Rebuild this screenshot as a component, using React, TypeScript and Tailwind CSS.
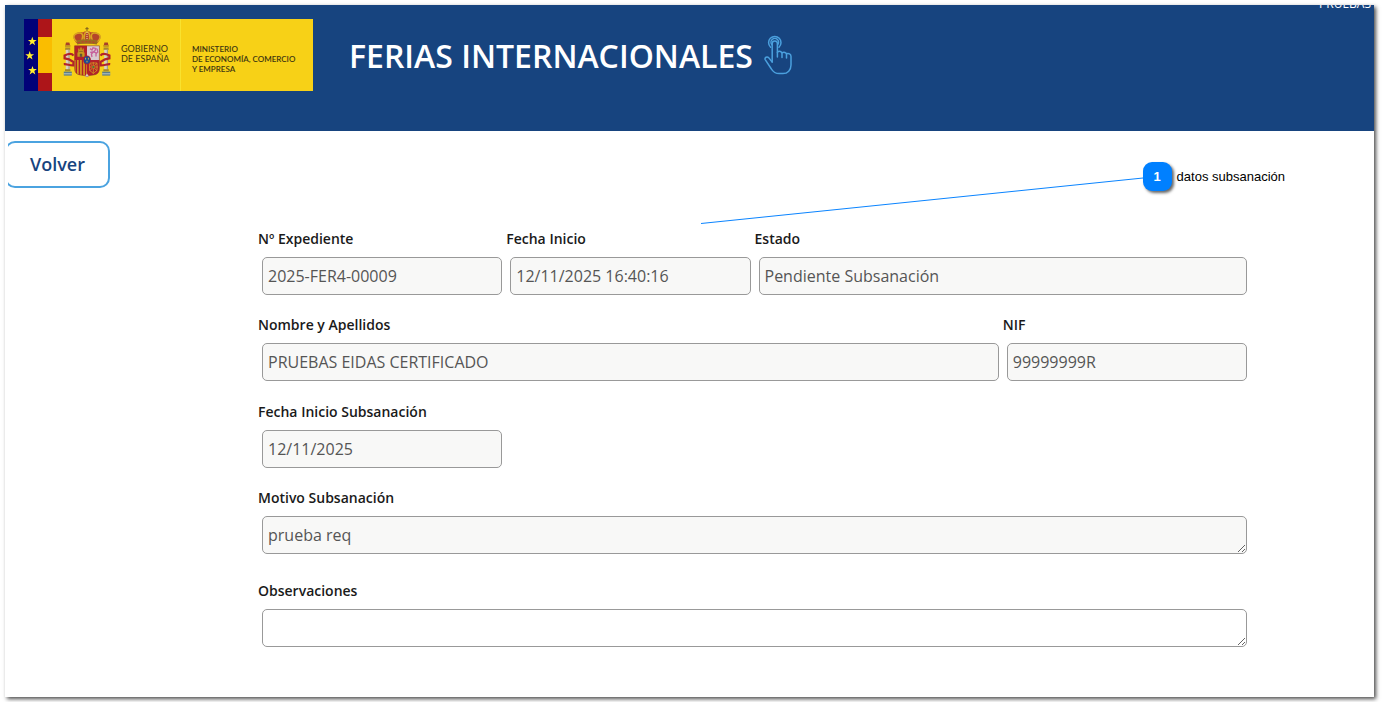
import React from "react";

function Star({ x, y }: { x: number; y: number }) {
  return (
    <path
      transform={`translate(${x} ${y})`}
      d="M0-4.6 1.1-1.4H4.4L1.8.6 2.8 3.9 0 1.9-2.8 3.9-1.8.6-4.4-1.4H-1.1Z"
      fill="#ffee2e"
    />
  );
}

function FlagStripe() {
  return (
    <svg width="28" height="72" viewBox="0 0 28 72" aria-hidden="true">
      <rect width="14" height="72" fill="#010178" />
      <rect x="14" width="14" height="72" fill="#ad1519" />
      <rect x="14" y="18" width="14" height="36" fill="#fabd00" />
      <Star x={8.3} y={22.4} />
      <Star x={5.7} y={36.6} />
      <Star x={8.5} y={51.5} />
    </svg>
  );
}

function Pillar() {
  return (
    <g>
      <path d="M2.2 2.4 3-1H6.4L7.2 2.4Z" fill="#a8402a" />
      <path d="M2 1.5H7.4V3.6H2Z" fill="#c79a22" />
      <rect x="2.2" y="4" width="5" height="2.4" fill="#a98a2b" />
      <rect x="2.8" y="6.2" width="3.8" height="20" fill="#d9d3c2" />
      <rect x="5.4" y="6.2" width="1.2" height="20" fill="#a39d8e" />
      <rect x="2" y="25.6" width="5.4" height="2" fill="#a98a2b" />
      <rect x="0.8" y="28" width="8" height="4" fill="#5c7d88" />
      <path d="M.8 30.2H8.8" stroke="#d3dad2" strokeWidth=".8" />
    </g>
  );
}

function CoatOfArms() {
  return (
    <svg width="48" height="52" viewBox="0 0 48 52" aria-hidden="true">
      {/* crown */}
      <path d="M24 0V4.4M22.4 1.6H25.6" stroke="#8a6a1c" strokeWidth="1.1" />
      <path
        d="M14 16.6C10.4 12.6 9.4 9.4 12 7.2 14.6 5 18 5.4 20 5.4 21.4 3.8 26.6 3.8 28 5.4 30 5.4 33.4 5 36 7.2 38.6 9.4 37.6 12.6 34 16.6Z"
        fill="#b5452a"
      />
      <path
        d="M14 15C10.4 12 9.8 9 12.4 7.2 16 5 19 6 19.6 8 20 10 19 12 18.6 14M34 15C37.6 12 38.2 9 35.6 7.2 32 5 29 6 28.4 8 28 10 29 12 29.4 14M21.6 14C20.4 10 21.6 5 24 4.6 26.4 5 27.6 10 26.4 14"
        fill="none"
        stroke="#d9a520"
        strokeWidth="1.5"
      />
      <path d="M24 5V14" stroke="#f1dfa5" strokeWidth="1" strokeDasharray="1 1" />
      <path d="M13.4 13.6Q24 11 34.6 13.6L33.8 17.6Q24 15.6 14.2 17.6Z" fill="#9a6e22" />
      <path d="M15 15.6Q24 13.8 33 15.6" fill="none" stroke="#c43a30" strokeWidth="1.2" strokeDasharray="2 1.6" />

      {/* pillars with their ribbons */}
      <g transform="translate(0 16.6)">
        <Pillar />
      </g>
      <g transform="translate(38.4 16.6)">
        <Pillar />
      </g>
      <path
        d="M10.5 28.6C8.6 25.8 5 26.8 1.6 28.4V31.4L6 32.4 10.4 35V38.4C6.6 38.6 4 36.8.8 37.2"
        fill="none"
        stroke="#b3232a"
        strokeWidth="2.2"
      />
      <path
        d="M37.5 28.6C39.4 25.8 43 26.8 46.4 28.4V31.4L42 32.4 37.6 35V38.4C41.4 38.6 44 36.8 47.2 37.2"
        fill="none"
        stroke="#b3232a"
        strokeWidth="2.2"
      />

      {/* shield */}
      <clipPath id="shield">
        <path d="M11.6 18.8H36.4V41.4Q36.4 47.6 30.2 48 26 48.2 24 49.8 22 48.2 17.8 48 11.6 47.6 11.6 41.4Z" />
      </clipPath>
      <g clipPath="url(#shield)">
        <rect x="11" y="18" width="13" height="15" fill="#b3202a" />
        <rect x="24" y="18" width="13" height="15" fill="#d9cbd0" />
        <rect x="11" y="33" width="13" height="17" fill="#d6a51c" />
        <rect x="24" y="33" width="13" height="17" fill="#b3202a" />
        <path
          d="M14.4 29.8V25.4H15.2V21.6H16.4V22.8H17.2V20.6H18.8V22.8H19.6V21.6H20.8V25.4H21.6V29.8Z"
          fill="#c79a1e"
        />
        <path d="M17.2 29.8V27H18.8V29.8M16.2 24.4H19.8" fill="#4b4a52" stroke="#6a4b20" strokeWidth=".6" />
        <path
          d="M27 21.6 29 23 30 20.8 32.8 21.4 32 23.6 30.6 24.8 33 26V29.6M30.6 24.8 28.4 27 29 30M27.2 25.4 30 25M33.2 26.4 34.8 25 34 21.6"
          fill="none"
          stroke="#c65f9a"
          strokeWidth="1.3"
        />
        <path d="M13.3 33V50M16.4 33V50M19.5 33V50M22.6 33V50" stroke="#b3202a" strokeWidth="1.5" />
        <path
          d="M26.6 36H34V43.4L30.3 46.4 26.6 43.4ZM26.6 36 34 44M34 36 26.6 44M30.3 35V47M26 40H35"
          fill="none"
          stroke="#cf8c24"
          strokeWidth=".9"
        />
        <circle cx="30.3" cy="40" r="1" fill="#3c7c3c" />
      </g>
      <path
        d="M11.6 18.8H36.4V41.4Q36.4 47.6 30.2 48 26 48.2 24 49.8 22 48.2 17.8 48 11.6 47.6 11.6 41.4Z"
        fill="none"
        stroke="#8d3c25"
        strokeWidth=".6"
      />
      <path d="M22 49.6 24 46.4 26 49.6Z" fill="#d5cfc0" />
      <ellipse cx="24" cy="33" rx="3.9" ry="4.5" fill="#b3202a" />
      <ellipse cx="24" cy="33" rx="3.2" ry="3.8" fill="#1b4c96" />
      <path d="M22.6 30.8V32.6M25.4 30.8V32.6M24 33.8V35.4" stroke="#d3b33d" strokeWidth="1" />
    </svg>
  );
}

function TapIcon() {
  return (
    <svg
      width="28"
      height="40"
      viewBox="0 0 28 40"
      fill="none"
      stroke="#4ba0de"
      strokeWidth="1.5"
      strokeLinecap="round"
      strokeLinejoin="round"
      aria-hidden="true"
    >
      <path d="M6.6 12.2A6.2 6.2 0 1 1 15 12.2" />
      <path d="M8 9.8A3.8 3.8 0 1 1 13.6 9.8" />
      <path d="M8.2 27V8.6A2.6 2.6 0 0 1 13.4 8.6V22" />
      <path d="M13.4 17.2C15.2 15.6 18 16.4 18 18.8V22.4M18 18C19.8 16.6 22.5 17.4 22.5 19.6V23M22.5 18.8C24.6 17.8 27 19 27 21.4V30C27 35 23.6 38.6 19 38.6H15.4C11.4 38.6 9.2 37.2 7.4 34L1.2 24.6C.4 22.6 3 21 4.6 22.6L8.2 27" />
    </svg>
  );
}

function GovernmentLogo() {
  return (
    <div className="flex h-[72px] w-[289px] shrink-0 bg-[#f7d117] font-['Lato',sans-serif] text-[9px] leading-[10px] text-[#3d3611]">
      <FlagStripe />
      <div className="ml-[11px] mt-2">
        <CoatOfArms />
      </div>
      <div className="ml-[10px] mt-[25px] w-[59px]">
        GOBIERNO
        <br />
        DE ESPAÑA
      </div>
      <div className="w-px bg-[#f8e22f]" />
      <div className="ml-[11px] mt-[25px] whitespace-nowrap text-[8px] font-semibold">
        MINISTERIO
        <br />
        DE ECONOMÍA, COMERCIO
        <br />Y EMPRESA
      </div>
    </div>
  );
}

interface FieldProps {
  id: string;
  label: string;
  value?: string;
  className?: string;
  multiline?: boolean;
  readOnly?: boolean;
}

function Field({ id, label, value = "", className = "", multiline = false, readOnly = true }: FieldProps) {
  const box = "mx-1 block h-[38px] rounded-[5px] border border-[#999] px-[5px] text-base text-[#555]";
  const background = readOnly ? "bg-[#f8f8f7]" : "bg-white";

  return (
    <div className={`flex flex-col gap-2 ${className}`}>
      <label htmlFor={id} className="text-sm font-semibold text-[#1a1a1a]">
        {label}
      </label>
      {multiline ? (
        <textarea
          id={id}
          rows={1}
          readOnly={readOnly}
          defaultValue={value}
          className={`${box} ${background} resize overflow-hidden py-1.5`}
        />
      ) : (
        <input id={id} type="text" readOnly={readOnly} defaultValue={value} className={`${box} ${background}`} />
      )}
    </div>
  );
}

function Callout() {
  return (
    <div className="absolute right-[89px] top-[157px] flex items-start">
      <svg width="443" height="64" viewBox="0 0 443 64" aria-hidden="true">
        <path d="M1 61.5 443 16" stroke="#0a84ff" strokeWidth="1" />
      </svg>
      <span className="flex size-[29px] items-center justify-center rounded-[9px] bg-[#0080ff] text-[13px] font-bold text-white shadow-[2px_2px_3px_rgba(0,0,0,0.6)] font-['Liberation_Sans',sans-serif]">
        1
      </span>
      <span className="ml-[5px] font-['Liberation_Sans',sans-serif] text-[13px] leading-[29px] text-black">
        datos subsanación
      </span>
    </div>
  );
}

export default function App() {
  return (
    <div className="bg-white py-[5px] pl-[5px] pr-[9px] font-['Open_Sans',sans-serif]">
      <div className="relative bg-white pb-[50px] shadow-[2px_2px_4px_rgba(0,0,0,0.7)]">
        <header className="flex h-[126px] items-start overflow-hidden bg-[#17447f] pl-[19px] pr-[3px]">
          <div className="mt-[14px]">
            <GovernmentLogo />
          </div>
          <h1 className="ml-[36px] mt-[31px] text-[32px] font-semibold leading-[40px] text-white">
            FERIAS INTERNACIONALES
          </h1>
          <div className="ml-[11px] mt-[30px]">
            <TapIcon />
          </div>
          <span className="-mt-[9px] ml-auto text-xs leading-4 text-white">PRUEBAS</span>
        </header>

        <div className="ml-[3px] mt-[10px] overflow-hidden">
          <button
            type="button"
            className="-ml-[3px] h-[47px] rounded-[10px] border-2 border-[#4ba3e0] bg-white px-[23px] pb-0.5 text-lg font-semibold text-[#17447f]"
          >
            Volver
          </button>
        </div>

        <form className="ml-[253px] mr-[123px] mt-[41px] grid grid-cols-4 gap-y-5">
          <Field id="expediente" label="Nº Expediente" value="2025-FER4-00009" />
          <Field id="fecha-inicio" label="Fecha Inicio" value="12/11/2025 16:40:16" />
          <Field id="estado" label="Estado" value="Pendiente Subsanación" className="col-span-2" />
          <Field id="nombre" label="Nombre y Apellidos" value="PRUEBAS EIDAS CERTIFICADO" className="col-span-3 mb-px" />
          <Field id="nif" label="NIF" value="99999999R" />
          <Field id="fecha-subsanacion" label="Fecha Inicio Subsanación" value="12/11/2025" className="col-start-1" />
          <Field id="motivo" label="Motivo Subsanación" value="prueba req" className="col-span-4" multiline />
          <Field id="observaciones" label="Observaciones" className="col-span-4 mt-[7px]" multiline readOnly={false} />
        </form>

        <Callout />
      </div>
    </div>
  );
}
